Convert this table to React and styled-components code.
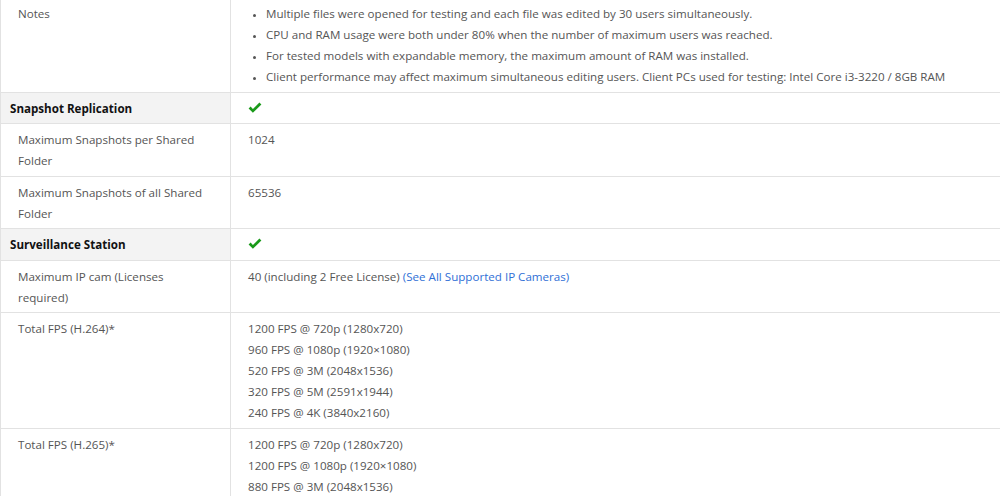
import React from 'react';
import styled, { createGlobalStyle } from 'styled-components';

const GlobalStyle = createGlobalStyle`
  html, body {
    margin: 0;
    padding: 0;
    background: #fff;
  }
  body {
    font-family: "Open Sans", "Liberation Sans", sans-serif;
    overflow: hidden;
  }
`;

const Page = styled.div`
  width: 1000px;
  height: 496px;
  overflow: hidden;
`;

const SpecTable = styled.table`
  width: 1010px;
  margin-top: -2px;
  border-collapse: collapse;
  table-layout: fixed;
  font-size: 11.6px;
  line-height: 21px;
  color: #555;
`;

const LabelCol = styled.col`
  width: 230px;
`;

const Row = styled.tr`
  border-bottom: 1px solid #e2e2e2;
`;

const Label = styled.td`
  vertical-align: top;
  padding: 5px 24px 4.5px 17px;
  border-left: 1px solid #e2e2e2;
  border-right: 1px solid #e2e2e2;
  background: ${p => (p.$section ? '#f3f3f3' : '#fff')};
  color: ${p => (p.$section ? '#111' : '#555')};
  font-weight: ${p => (p.$section ? 700 : 400)};
  padding-left: ${p => (p.$section ? '9px' : '17px')};
`;

const Value = styled.td`
  vertical-align: top;
  padding: 5px 10px 4.5px 17px;
`;

const Bullets = styled.ul`
  margin: 0;
  padding: 0 0 0 18px;
  list-style: disc;

  li::marker {
    font-size: 9px;
  }
`;

const Link = styled.a`
  color: #2f6fd6;
  text-decoration: none;
`;

const Lines = styled.div`
  display: flex;
  flex-direction: column;
`;

const Check = () => (
  <svg width="14" height="12" viewBox="0 0 14 12" style={{ verticalAlign: '-1px' }}>
    <path d="M0.6 6.4 L4.9 10.8 L13.4 2.4 L11.4 0.6 L4.9 7 L2.6 4.6 Z" fill="#1a9a1a" />
  </svg>
);

const notes = [
  'Multiple files were opened for testing and each file was edited by 30 users simultaneously.',
  'CPU and RAM usage were both under 80% when the number of maximum users was reached.',
  'For tested models with expandable memory, the maximum amount of RAM was installed.',
  'Client performance may affect maximum simultaneous editing users. Client PCs used for testing: Intel Core i3-3220 / 8GB RAM',
];

const h264 = [
  '1200 FPS @ 720p (1280x720)',
  '960 FPS @ 1080p (1920×1080)',
  '520 FPS @ 3M (2048x1536)',
  '320 FPS @ 5M (2591x1944)',
  '240 FPS @ 4K (3840x2160)',
];

const h265 = [
  '1200 FPS @ 720p (1280x720)',
  '1200 FPS @ 1080p (1920×1080)',
  '880 FPS @ 3M (2048x1536)',
  '640 FPS @ 5M (2591x1944)',
];

export default function App() {
  return (
    <Page>
      <GlobalStyle />
      <SpecTable>
        <colgroup>
          <LabelCol />
          <col />
        </colgroup>
        <tbody>
          <Row>
            <Label>Notes</Label>
            <Value>
              <Bullets>
                {notes.map(n => <li key={n}>{n}</li>)}
              </Bullets>
            </Value>
          </Row>
          <Row>
            <Label $section>Snapshot Replication</Label>
            <Value><Check /></Value>
          </Row>
          <Row>
            <Label>Maximum Snapshots per Shared Folder</Label>
            <Value>1024</Value>
          </Row>
          <Row>
            <Label>Maximum Snapshots of all Shared Folder</Label>
            <Value>65536</Value>
          </Row>
          <Row>
            <Label $section>Surveillance Station</Label>
            <Value><Check /></Value>
          </Row>
          <Row>
            <Label>Maximum IP cam (Licenses required)</Label>
            <Value>
              40 (including 2 Free License) <Link href="#">(See All Supported IP Cameras)</Link>
            </Value>
          </Row>
          <Row>
            <Label>Total FPS (H.264)*</Label>
            <Value>
              <Lines>{h264.map(l => <span key={l}>{l}</span>)}</Lines>
            </Value>
          </Row>
          <Row>
            <Label>Total FPS (H.265)*</Label>
            <Value>
              <Lines>{h265.map(l => <span key={l}>{l}</span>)}</Lines>
            </Value>
          </Row>
        </tbody>
      </SpecTable>
    </Page>
  );
}
